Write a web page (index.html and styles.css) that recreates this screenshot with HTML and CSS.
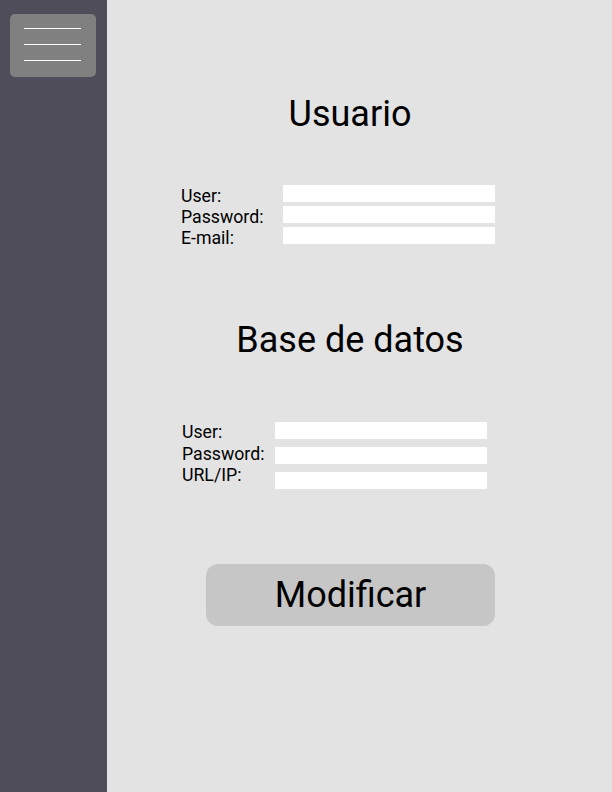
FILE: index.html
```html
<!DOCTYPE html>
<html lang="es">
<head>
<meta charset="utf-8">
<title>Configuración</title>
<link rel="stylesheet" href="styles.css">
</head>
<body>
<div class="app">
  <aside class="sidebar">
    <div class="menu-btn">
      <span class="bar"></span>
      <span class="bar"></span>
      <span class="bar"></span>
    </div>
  </aside>
  <main class="main">
    <div class="content">
      <h1 class="title">Usuario</h1>
      <div class="form form-user">
        <div class="labels">
          <div>User:</div>
          <div>Password:</div>
          <div>E-mail:</div>
        </div>
        <div class="inputs">
          <div class="field"></div>
          <div class="field"></div>
          <div class="field"></div>
        </div>
      </div>
      <h1 class="title title-db">Base de datos</h1>
      <div class="form form-db">
        <div class="labels">
          <div>User:</div>
          <div>Password:</div>
          <div>URL/IP:</div>
        </div>
        <div class="inputs">
          <div class="field"></div>
          <div class="field"></div>
          <div class="field"></div>
        </div>
      </div>
      <div class="btn">Modificar</div>
    </div>
  </main>
</div>
</body>
</html>
```
FILE: styles.css
```css
html, body {
  margin: 0;
  padding: 0;
  height: 100%;
}
body {
  font-family: Roboto, "Liberation Sans", sans-serif;
  color: #000;
  background: #e3e3e3;
}
.app {
  display: flex;
  height: 792px;
}
.sidebar {
  width: 107px;
  flex: none;
  background: #4f4d5a;
  padding: 14px 0 0 10px;
  box-sizing: border-box;
}
.menu-btn {
  width: 86px;
  height: 63px;
  background: #808080;
  border-radius: 5px;
  box-sizing: border-box;
  padding: 14px 0 0 14px;
  display: flex;
  flex-direction: column;
  gap: 15px;
}
.bar {
  display: block;
  width: 57px;
  height: 1px;
  background: #fff;
}
.main {
  flex: 1;
  padding: 92px 0 0 74px;
  box-sizing: border-box;
}
.content {
  width: 338px;
  display: flex;
  flex-direction: column;
}
.title {
  margin: 0;
  font-size: 36px;
  font-weight: 400;
  line-height: 44px;
  text-align: center;
}
.title-db {
  margin-top: 69px;
}
.form {
  display: flex;
  font-size: 17.7px;
}
.form-user {
  margin-top: 49px;
}
.form-user .labels {
  width: 102px;
  padding-top: 1px;
  line-height: 21px;
}
.form-user .inputs {
  gap: 4px;
}
.form-db {
  margin-top: 60px;
  padding-left: 1px;
}
.form-db .labels {
  width: 93px;
  line-height: 21.5px;
}
.form-db .inputs {
  gap: 8px;
}
.labels {
  white-space: nowrap;
}
.inputs {
  display: flex;
  flex-direction: column;
}
.field {
  width: 212px;
  height: 17px;
  background: #fff;
}
.btn {
  margin: 75px 0 0 25px;
  width: 289px;
  height: 62px;
  border-radius: 12px;
  background: #c6c6c6;
  font-size: 36px;
  line-height: 62px;
  text-align: center;
}
```
